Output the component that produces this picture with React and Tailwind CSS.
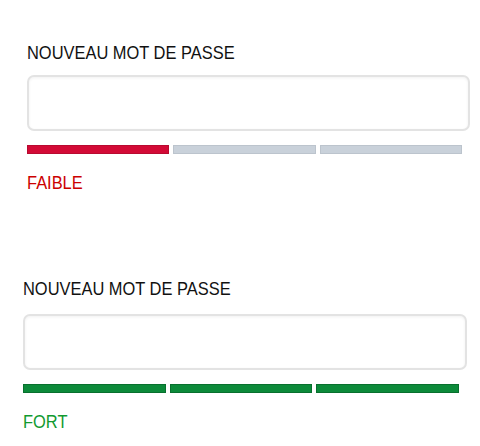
export default function App() {
  const font = { fontFamily: '"Liberation Sans", Arial, sans-serif' };
  return (
    <div className="w-[480px] h-[446px] bg-white overflow-hidden" style={font}>
      <div className="pt-[44px] pl-[27px] flex flex-col">
        <div className="text-[18px] leading-[18px] text-[#111] scale-x-[0.913] origin-left whitespace-nowrap">NOUVEAU MOT DE PASSE</div>
        <div className="mt-[13px] w-[443px] h-[56px] rounded-[7px] border-2 border-[#e3e3e3] bg-white shadow-[inset_0_1px_3px_rgba(0,0,0,0.06)]"></div>
        <div className="mt-[14px] w-[435px] flex gap-[4px]">
          <div className="flex-1 h-[9px] bg-[#d30a36] border border-[#b80a30]"></div>
          <div className="flex-1 h-[9px] bg-[#c9d1da] border border-[#bcc4cd]"></div>
          <div className="flex-1 h-[9px] bg-[#c9d1da] border border-[#bcc4cd]"></div>
        </div>
        <div className="mt-[20px] text-[18px] leading-[18px] text-[#cc0000] scale-x-[0.913] origin-left">FAIBLE</div>
      </div>
      <div className="mt-[88px] pl-[23px] flex flex-col">
        <div className="text-[18px] leading-[18px] text-[#111] scale-x-[0.913] origin-left whitespace-nowrap">NOUVEAU MOT DE PASSE</div>
        <div className="mt-[16px] w-[444px] h-[56px] rounded-[7px] border-2 border-[#e3e3e3] bg-white shadow-[inset_0_1px_3px_rgba(0,0,0,0.06)]"></div>
        <div className="mt-[14px] w-[436px] flex gap-[4px]">
          <div className="flex-1 h-[9px] bg-[#0c8a3a] border border-[#08702e]"></div>
          <div className="flex-1 h-[9px] bg-[#0c8a3a] border border-[#08702e]"></div>
          <div className="flex-1 h-[9px] bg-[#0c8a3a] border border-[#08702e]"></div>
        </div>
        <div className="mt-[20px] text-[18px] leading-[18px] text-[#119a30] scale-x-[0.913] origin-left">FORT</div>
      </div>
    </div>
  );
}
